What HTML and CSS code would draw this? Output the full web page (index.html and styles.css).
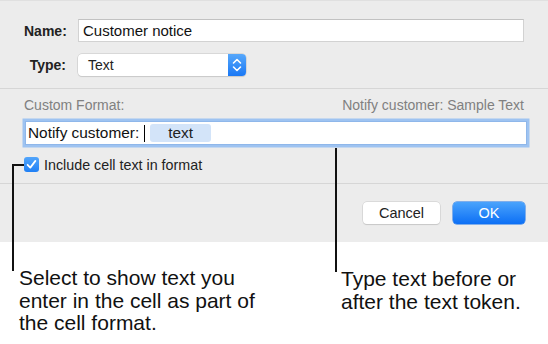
FILE: index.html
```html
<!DOCTYPE html>
<html lang="en">

<head>
    <meta charset="UTF-8">
    <meta name="viewport" content="width=device-width, initial-scale=1.0">
    <title>Custom Format</title>
    <link rel="stylesheet" href="styles.css">
</head>

<body>
    <div class="page">
        <div class="dialog">
            <div class="section top">
                <div class="row">
                    <div class="label">Name:</div>
                    <div class="field name-field">Customer notice</div>
                </div>
                <div class="row">
                    <div class="label">Type:</div>
                    <div class="popup">
                        <span class="popup-text">Text</span>
                        <span class="stepper">
                            <svg width="18" height="22" viewBox="0 0 18 22">
                                <path d="M5.5 9 L9 5.5 L12.5 9" fill="none" stroke="#fff" stroke-width="1.6" stroke-linecap="round" stroke-linejoin="round" />
                                <path d="M5.5 13 L9 16.5 L12.5 13" fill="none" stroke="#fff" stroke-width="1.6" stroke-linecap="round" stroke-linejoin="round" />
                            </svg>
                        </span>
                    </div>
                </div>
            </div>
            <div class="section mid">
                <div class="fmt-head">
                    <span>Custom Format:</span>
                    <span>Notify customer: Sample Text</span>
                </div>
                <div class="fmt-field">
                    <span>Notify customer:</span>
                    <span class="caret"></span>
                    <span class="token">text</span>
                </div>
                <div class="check-row">
                    <span class="checkbox">
                        <svg width="15" height="15" viewBox="0 0 15 15">
                            <path d="M3.6 7.8 L6.3 10.6 L11.4 3.9" fill="none" stroke="#fff" stroke-width="1.8" stroke-linecap="round" stroke-linejoin="round" />
                        </svg>
                    </span>
                    <span>Include cell text in format</span>
                </div>
            </div>
            <div class="section bottom">
                <button class="btn">Cancel</button>
                <button class="btn ok">OK</button>
            </div>
        </div>

        <div class="notes">
            <p class="note note-left">Select to show text you<br>enter in the cell as part of<br>the cell format.</p>
            <p class="note note-right">Type text before or<br>after the text token.</p>
        </div>

        <!-- callout lines drawn over the dialog -->
        <div class="callout callout-check"></div>
        <div class="callout callout-field"></div>
    </div>
</body>

</html>
```

FILE: styles.css
```css
* {
    box-sizing: border-box;
}

body {
    margin: 0;
    background: #fff;
    font-family: "Liberation Sans", Arial, sans-serif;
    color: #1d1d1d;
}

.page {
    position: relative;
    width: 548px;
    height: 344px;
}

.dialog {
    background: #ececec;
    border-top: 1px solid #e0e0e0;
}

.section {
    border-bottom: 1px solid #d6d6d6;
}

.top {
    padding: 18px 24px 12px 24px;
    display: flex;
    flex-direction: column;
    gap: 12px;
}

.row {
    display: flex;
    align-items: center;
    gap: 12px;
}

.label {
    width: 42px;
    text-align: right;
    font-weight: bold;
    font-size: 14px;
    color: #222;
}

.field {
    background: #fff;
    border: 1px solid #d2d2d2;
    border-top-color: #c2c2c2;
    height: 23px;
    line-height: 21px;
    padding-left: 4px;
    font-size: 15px;
    color: #111;
}

.name-field {
    flex: 1;
}

.popup {
    width: 168px;
    height: 22px;
    display: flex;
    align-items: center;
    background: #fff;
    border-radius: 4px;
    box-shadow: 0 0 0 0.5px #c4c4c4, 0 1px 1px rgba(0, 0, 0, 0.12);
    overflow: hidden;
}

.popup-text {
    flex: 1;
    padding-left: 10px;
    font-size: 14px;
    color: #222;
}

.stepper {
    width: 18px;
    height: 22px;
    display: flex;
    background: linear-gradient(to bottom, #57a8fb, #1a78f5);
}

.mid {
    padding: 8px 24px 11px 24px;
}

.fmt-head {
    display: flex;
    justify-content: space-between;
    font-size: 14px;
    line-height: 16px;
    color: #808080;
}

.fmt-field {
    margin: 8px -3px 0 1px;
    height: 24px;
    background: #fff;
    border: 1px solid #8fb7ea;
    box-shadow: 0 0 0 2.5px #9ec3f1;
    display: flex;
    align-items: center;
    padding-left: 2px;
    font-size: 15.4px;
    color: #111;
}

.caret {
    width: 1px;
    height: 17px;
    background: #000;
    margin-left: 5px;
}

.token {
    width: 61px;
    height: 18px;
    line-height: 18px;
    margin-left: 5px;
    background: #d3e4f9;
    border-radius: 3px;
    text-align: center;
    color: #222;
}

.check-row {
    margin-top: 12px;
    display: flex;
    align-items: center;
    gap: 5px;
    height: 15px;
    font-size: 14.3px;
    color: #222;
}

.checkbox {
    width: 15px;
    height: 15px;
    display: flex;
    border-radius: 3px;
    background: linear-gradient(to bottom, #52a5fb, #2080f5);
}

.bottom {
    border-bottom: none;
    padding: 18px 23px 18px 0;
    display: flex;
    justify-content: flex-end;
    gap: 13px;
}

.btn {
    height: 22px;
    width: 77px;
    border: none;
    border-radius: 4px;
    background: #fff;
    box-shadow: 0 0 0 0.5px #c8c8c8, 0 1px 1px rgba(0, 0, 0, 0.15);
    font-family: "Liberation Sans", Arial, sans-serif;
    font-size: 14.5px;
    color: #222;
    padding: 0;
}

.btn.ok {
    width: 72px;
    background: linear-gradient(to bottom, #4aa3fc, #0c6ff5);
    box-shadow: 0 0 0 0.5px #1470e8;
    color: #fff;
}

.notes {
    display: flex;
    padding-top: 25px;
}

.note {
    margin: 0;
    font-size: 21px;
    line-height: 22.5px;
    color: #111;
}

.note-left {
    margin-left: 19px;
    width: 322px;
}

.note-right {
    margin-top: 1px;
}

.callout {
    position: absolute;
    border-color: #111;
    border-style: solid;
    border-width: 0;
}

.callout-check {
    left: 12px;
    top: 164px;
    width: 12px;
    height: 107px;
    border-left-width: 2px;
    border-top-width: 2px;
}

.callout-field {
    left: 335px;
    top: 148px;
    width: 2px;
    height: 124px;
    border-left-width: 2px;
}
```
